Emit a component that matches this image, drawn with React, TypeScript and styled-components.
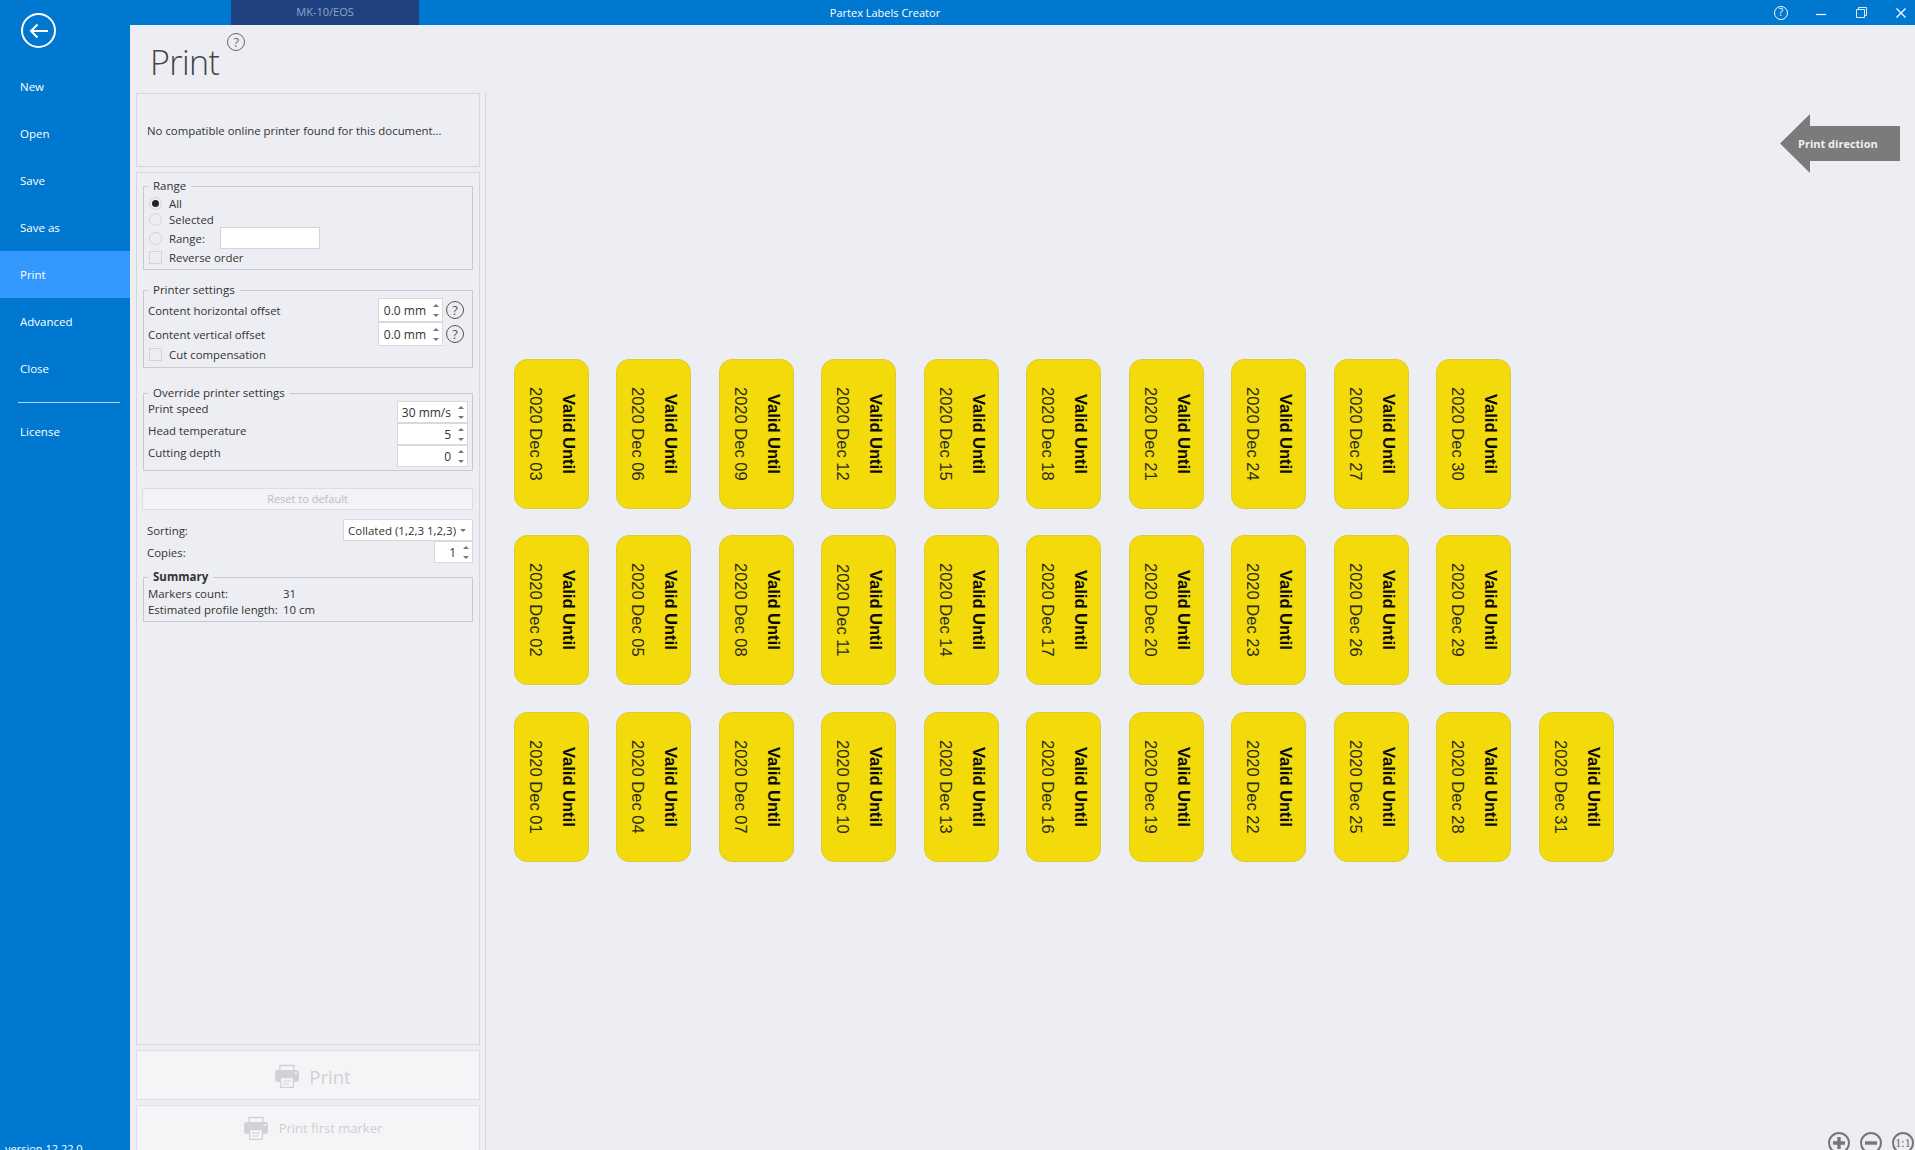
import styled, { createGlobalStyle } from "styled-components";

const Global = createGlobalStyle`
  html, body { margin: 0; padding: 0; height: 100%; overflow: hidden; }
  body { font-family: "Open Sans", "Noto Sans", sans-serif; font-size: 11.4px; color: #333; background: #edeef3; }
  * { box-sizing: border-box; }
`;

const Window = styled.div`
  display: flex;
  width: 100vw;
  height: 100vh;
  overflow: hidden;
`;

const Sidebar = styled.nav`
  display: flex;
  flex-direction: column;
  flex: 0 0 130px;
  padding-top: 13px;
  background: #0078cf;
  color: #fff;
`;

const BackButton = styled.div`
  display: flex;
  align-items: center;
  justify-content: center;
  width: 35px;
  height: 35px;
  margin: 0 0 15px 21px;
  border: 2px solid #fff;
  border-radius: 50%;
`;

const NavItem = styled.div<{ $active?: boolean }>`
  display: flex;
  align-items: center;
  height: 47px;
  padding-left: 20px;
  font-size: 11.5px;
  background: ${(p) => (p.$active ? "#3399ff" : "transparent")};
`;

const NavRule = styled.div`
  height: 1px;
  margin: 10px 10px 5px 18px;
  background: #b5d9f3;
`;

const Version = styled.div`
  margin: auto 0 -7px 5px;
  font-size: 11px;
  line-height: 16px;
`;

const Content = styled.div`
  display: flex;
  flex-direction: column;
  flex: 1;
  min-width: 0;
`;

const TitleBar = styled.header`
  display: flex;
  flex: 0 0 25px;
  align-items: center;
  background: #0078cf;
  color: #fff;
`;

const DocTab = styled.div`
  width: 188px;
  height: 25px;
  margin-left: 101px;
  background: #1f4180;
  color: #8ea6c9;
  font-size: 11px;
  line-height: 24px;
  text-align: center;
`;

const AppTitle = styled.div`
  width: 932px;
  font-size: 11px;
  text-align: center;
`;

const WindowControls = styled.div`
  display: flex;
  gap: 12px;
  margin-left: auto;
`;

const WindowControl = styled.div`
  display: flex;
  align-items: center;
  justify-content: center;
  width: 28px;
  height: 25px;
`;

const Body = styled.div`
  display: flex;
  flex: 1;
  min-height: 0;
`;

const LeftColumn = styled.section`
  flex: 0 0 356px;
`;

const PageHeader = styled.div`
  display: flex;
  align-items: flex-start;
  height: 68px;
  padding-left: 20px;
`;

const PageTitle = styled.h1`
  margin: 13px 0 0;
  font-size: 34px;
  font-weight: 300;
  letter-spacing: -0.6px;
  line-height: 48px;
  color: #444;
`;

const Help = styled.span<{ $size: number; $color: string }>`
  display: inline-flex;
  flex: none;
  align-items: center;
  justify-content: center;
  width: ${(p) => p.$size}px;
  height: ${(p) => p.$size}px;
  border: ${(p) => (p.$size > 16 ? "1.5px" : "1px")} solid ${(p) => p.$color};
  border-radius: 50%;
  color: ${(p) => p.$color};
  font-size: ${(p) => p.$size * 0.72}px;
  line-height: 1;
`;

const TitleHelp = styled.div`
  margin: 8px 0 0 8px;
`;

const Panels = styled.div`
  display: flex;
  flex-direction: column;
  gap: 5px;
  padding: 0 5px 0 6px;
  border-right: 1px solid #d5d5dc;
`;

const PrinterBox = styled.div`
  display: flex;
  align-items: center;
  height: 74px;
  padding-left: 10px;
  border: 1px solid #d5d5dc;
`;

const SettingsBox = styled.div`
  height: 873px;
  padding: 5px 6px 0;
  border: 1px solid #d5d5dc;
`;

const Group = styled.fieldset<{ $top?: number; $bottom?: number }>`
  margin: ${(p) => p.$top ?? 0}px 0 0;
  padding: 0 4px ${(p) => p.$bottom ?? 2}px;
  border: 1px solid #c9c9d1;
  min-width: 0;
`;

const GroupTitle = styled.legend<{ $bold?: boolean }>`
  margin-left: 0;
  padding: 0 5px;
  font-size: 11.5px;
  font-weight: ${(p) => (p.$bold ? 700 : 500)};
  line-height: 16px;
  color: #333;
`;

const Row = styled.div<{ $h: number }>`
  display: flex;
  align-items: center;
  height: ${(p) => p.$h}px;
`;

const Indented = styled.div<{ $h: number }>`
  display: flex;
  align-items: center;
  gap: 7px;
  height: ${(p) => p.$h}px;
  padding-left: 1px;
`;

const Radio = styled.span<{ $checked?: boolean }>`
  display: flex;
  align-items: center;
  justify-content: center;
  width: 13px;
  height: 13px;
  border: 1px solid #d3d3da;
  border-radius: 50%;
  &::after {
    content: "";
    display: ${(p) => (p.$checked ? "block" : "none")};
    width: 7px;
    height: 7px;
    border-radius: 50%;
    background: #222;
  }
`;

const Check = styled.span`
  width: 13px;
  height: 13px;
  border: 1px solid #d3d3da;
`;

const TextInput = styled.div`
  width: 100px;
  height: 22px;
  margin-left: 8px;
  border: 1px solid #d3d3da;
  background: #fff;
`;

const Label = styled.span<{ $lift?: number }>`
  padding-bottom: ${(p) => p.$lift ?? 0}px;
`;

const Spin = styled.div<{ $w: number; $h: number }>`
  display: flex;
  align-items: center;
  justify-content: flex-end;
  gap: 7px;
  width: ${(p) => p.$w}px;
  height: ${(p) => p.$h}px;
  padding-right: 3px;
  margin-left: auto;
  border: 1px solid #d8d8de;
  background: #fff;
  font-size: 12px;
`;

const SpinArrows = styled.span`
  display: flex;
  flex-direction: column;
  gap: 7px;
`;

const Tri = styled.span<{ $up?: boolean }>`
  width: 0;
  height: 0;
  border-left: 3px solid transparent;
  border-right: 3px solid transparent;
  ${(p) => (p.$up ? "border-bottom: 3px solid #777;" : "border-top: 3px solid #777;")}
`;

const HelpSlot = styled.div`
  display: flex;
  justify-content: center;
  width: 24px;
  margin-right: 1px;
`;

const ResetButton = styled.div`
  width: 331px;
  height: 22px;
  margin: 17px 0 0 -1px;
  border: 1px solid #dcdce2;
  background: #f3f3f6;
  color: #bdbdc2;
  font-size: 11px;
  line-height: 20px;
  text-align: center;
`;

const PlainRow = styled.div<{ $h: number; $top?: number }>`
  display: flex;
  align-items: center;
  height: ${(p) => p.$h}px;
  margin-top: ${(p) => p.$top ?? 0}px;
  padding-left: 4px;
`;

const Select = styled.div`
  display: flex;
  align-items: center;
  justify-content: space-between;
  width: 130px;
  height: 22px;
  margin-left: auto;
  padding: 0 6px 0 4px;
  border: 1px solid #d8d8de;
  background: #fff;
  font-size: 11.5px;
  white-space: nowrap;
`;

const SummaryRow = styled.div`
  display: flex;
  height: 16px;
  line-height: 18px;
`;

const SummaryKey = styled.span`
  width: 135px;
`;

const ActionButton = styled.div<{ $large?: boolean }>`
  display: flex;
  flex: none;
  align-items: center;
  justify-content: center;
  gap: ${(p) => (p.$large ? 10 : 11)}px;
  height: 50px;
  padding: ${(p) => (p.$large ? "2px 0 0 10px" : "0 0 4px 10px")};
  border: 1px solid #dfdfe5;
  background: #f5f5f7;
  color: #cfcfd3;
  font-size: ${(p) => (p.$large ? 18.5 : 13)}px;
`;

const Canvas = styled.main`
  position: relative;
  flex: 1;
  padding: 333.75px 0 0 27.5px;
`;

const LabelSheet = styled.div`
  display: grid;
  grid-template-columns: repeat(11, 75px);
  grid-auto-rows: 150px;
  column-gap: 27.5px;
  row-gap: 26.5px;
`;

const Marker = styled.div<{ $col: number; $row: number }>`
  grid-column: ${(p) => p.$col};
  grid-row: ${(p) => p.$row};
  display: flex;
  flex-direction: column;
  align-items: center;
  justify-content: center;
  writing-mode: vertical-rl;
  padding-left: 1px;
  border: 1px solid #dbcb38;
  border-radius: 13px;
  background: #f3da0b;
  color: #2b2b1c;
  font-family: "Liberation Sans", Arial, sans-serif;
  font-size: 16.5px;
  line-height: 33px;
`;

const MarkerTitle = styled.b`
  color: #0b0b05;
`;

const DirectionArrow = styled.div`
  position: absolute;
  top: 89px;
  right: 15px;
  display: flex;
  align-items: center;
  width: 120px;
  height: 59px;
  padding-left: 18px;
  background: #7b7b7b;
  color: #f0f0f0;
  font-size: 11px;
  font-weight: 700;
  clip-path: polygon(0 50%, 30px 0, 30px 12px, 120px 12px, 120px 47px, 30px 47px, 30px 100%);
`;

const ZoomTools = styled.div`
  position: absolute;
  right: 1px;
  bottom: -4px;
  display: flex;
  gap: 10px;
`;

const ZoomCircle = styled.div`
  display: flex;
  align-items: center;
  justify-content: center;
  width: 22px;
  height: 22px;
  border: 2px solid #777;
  border-radius: 50%;
  color: #666;
  font-family: "Liberation Serif", serif;
  font-size: 12px;
`;

const PrinterIcon = ({ size }: { size: number }) => (
  <svg width={size} height={size} viewBox="0 0 24 24">
    <path d="M5 6V1.5h14V6" fill="none" stroke="#d2d2d6" strokeWidth="1.3" />
    <path d="M3 6h18a3 3 0 0 1 3 3v6a3 3 0 0 1-3 3h-2v-5H5v5H3a3 3 0 0 1-3-3V9a3 3 0 0 1 3-3z" fill="#d2d2d6" />
    <path d="M5.6 13.6h12.8v9.8H5.6z" fill="#f5f5f7" stroke="#d2d2d6" strokeWidth="1.2" />
    <path d="M8 17h8M8 20h6" stroke="#d2d2d6" strokeWidth="1.2" />
    <rect x="20" y="8.5" width="2" height="1.5" fill="#f5f5f7" />
  </svg>
);

const SpinBox = ({ value, w, h }: { value: string; w: number; h: number }) => (
  <Spin $w={w} $h={h}>
    {value}
    <SpinArrows>
      <Tri $up />
      <Tri />
    </SpinArrows>
  </Spin>
);

const navTop = ["New", "Open", "Save", "Save as", "Print", "Advanced", "Close"];

const days = (start: number) => {
  const out: number[] = [];
  for (let d = start; d <= 31; d += 3) out.push(d);
  return out;
};

const sheetRows = [days(3), days(2), days(1)];

export default function App() {
  return (
    <>
      <Global />
      <Window>
        <Sidebar>
          <BackButton>
            <svg width="20" height="16" viewBox="0 0 20 16" fill="none" stroke="#fff" strokeWidth="2">
              <path d="M19 8H2M8.5 1.5 2 8l6.5 6.5" />
            </svg>
          </BackButton>
          {navTop.map((n) => (
            <NavItem key={n} $active={n === "Print"}>
              {n}
            </NavItem>
          ))}
          <NavRule />
          <NavItem>License</NavItem>
          <Version>version 12.22.0</Version>
        </Sidebar>

        <Content>
          <TitleBar>
            <DocTab>MK-10/EOS</DocTab>
            <AppTitle>Partex Labels Creator</AppTitle>
            <WindowControls>
              <WindowControl>
                <Help $size={14} $color="#fff">?</Help>
              </WindowControl>
              <WindowControl>
                <svg width="10" height="10" viewBox="0 0 10 10">
                  <path d="M0 6.5h10" stroke="#fff" strokeWidth="1.2" />
                </svg>
              </WindowControl>
              <WindowControl>
                <svg width="11" height="11" viewBox="0 0 11 11" fill="none" stroke="#dcecf8">
                  <path d="M.5 2.5h8v8h-8z" />
                  <path d="M2.5 2.5v-2h8v8h-2" />
                </svg>
              </WindowControl>
              <WindowControl>
                <svg width="10" height="10" viewBox="0 0 10 10">
                  <path d="M.5.5l9 9M9.5.5l-9 9" stroke="#fff" strokeWidth="1.2" />
                </svg>
              </WindowControl>
            </WindowControls>
          </TitleBar>

          <Body>
            <LeftColumn>
              <PageHeader>
                <PageTitle>Print</PageTitle>
                <TitleHelp>
                  <Help $size={18} $color="#666">?</Help>
                </TitleHelp>
              </PageHeader>
              <Panels>
                <PrinterBox>No compatible online printer found for this document...</PrinterBox>
                <SettingsBox>
                  <Group $bottom={4}>
                    <GroupTitle>Range</GroupTitle>
                    <Indented $h={18}>
                      <Radio $checked />
                      All
                    </Indented>
                    <Indented $h={15}>
                      <Radio />
                      Selected
                    </Indented>
                    <Indented $h={22}>
                      <Radio />
                      Range:
                      <TextInput />
                    </Indented>
                    <Indented $h={16}>
                      <Check />
                      Reverse order
                    </Indented>
                  </Group>

                  <Group $top={12} $bottom={4}>
                    <GroupTitle>Printer settings</GroupTitle>
                    <Row $h={24}>
                      Content horizontal offset
                      <SpinBox value="0.0 mm" w={65} h={24} />
                      <HelpSlot>
                        <Help $size={18} $color="#555">?</Help>
                      </HelpSlot>
                    </Row>
                    <Row $h={24}>
                      Content vertical offset
                      <SpinBox value="0.0 mm" w={65} h={24} />
                      <HelpSlot>
                        <Help $size={18} $color="#555">?</Help>
                      </HelpSlot>
                    </Row>
                    <Indented $h={17}>
                      <Check />
                      Cut compensation
                    </Indented>
                  </Group>

                  <Group $top={17} $bottom={3}>
                    <GroupTitle>Override printer settings</GroupTitle>
                    <Row $h={22}>
                      <Label $lift={7}>Print speed</Label>
                      <SpinBox value="30 mm/s" w={71} h={22} />
                    </Row>
                    <Row $h={22}>
                      <Label $lift={7}>Head temperature</Label>
                      <SpinBox value="5" w={71} h={22} />
                    </Row>
                    <Row $h={22}>
                      <Label $lift={7}>Cutting depth</Label>
                      <SpinBox value="0" w={71} h={22} />
                    </Row>
                  </Group>

                  <ResetButton>Reset to default</ResetButton>

                  <PlainRow $h={22} $top={9}>
                    Sorting:
                    <Select>
                      Collated (1,2,3 1,2,3)
                      <Tri />
                    </Select>
                  </PlainRow>
                  <PlainRow $h={22}>
                    Copies:
                    <SpinBox value="1" w={39} h={22} />
                  </PlainRow>

                  <Group $top={6} $bottom={4}>
                    <GroupTitle $bold>Summary</GroupTitle>
                    <SummaryRow>
                      <SummaryKey>Markers count:</SummaryKey>
                      31
                    </SummaryRow>
                    <SummaryRow>
                      <SummaryKey>Estimated profile length:</SummaryKey>
                      10 cm
                    </SummaryRow>
                  </Group>
                </SettingsBox>
                <ActionButton $large>
                  <PrinterIcon size={24} />
                  Print
                </ActionButton>
                <ActionButton>
                  <PrinterIcon size={24} />
                  Print first marker
                </ActionButton>
              </Panels>
            </LeftColumn>

            <Canvas>
              <DirectionArrow>Print direction</DirectionArrow>
              <LabelSheet>
                {sheetRows.map((row, r) =>
                  row.map((day, c) => (
                    <Marker key={day} $row={r + 1} $col={c + 1}>
                      <MarkerTitle>Valid Until</MarkerTitle>
                      <span>2020 Dec {String(day).padStart(2, "0")}</span>
                    </Marker>
                  ))
                )}
              </LabelSheet>
              <ZoomTools>
                <ZoomCircle>
                  <svg width="14" height="14" viewBox="0 0 14 14">
                    <path d="M7 1v12M1 7h12" stroke="#777" strokeWidth="3.4" />
                  </svg>
                </ZoomCircle>
                <ZoomCircle>
                  <svg width="14" height="14" viewBox="0 0 14 14">
                    <path d="M1 7h12" stroke="#777" strokeWidth="3.4" />
                  </svg>
                </ZoomCircle>
                <ZoomCircle>1:1</ZoomCircle>
              </ZoomTools>
            </Canvas>
          </Body>
        </Content>
      </Window>
    </>
  );
}
